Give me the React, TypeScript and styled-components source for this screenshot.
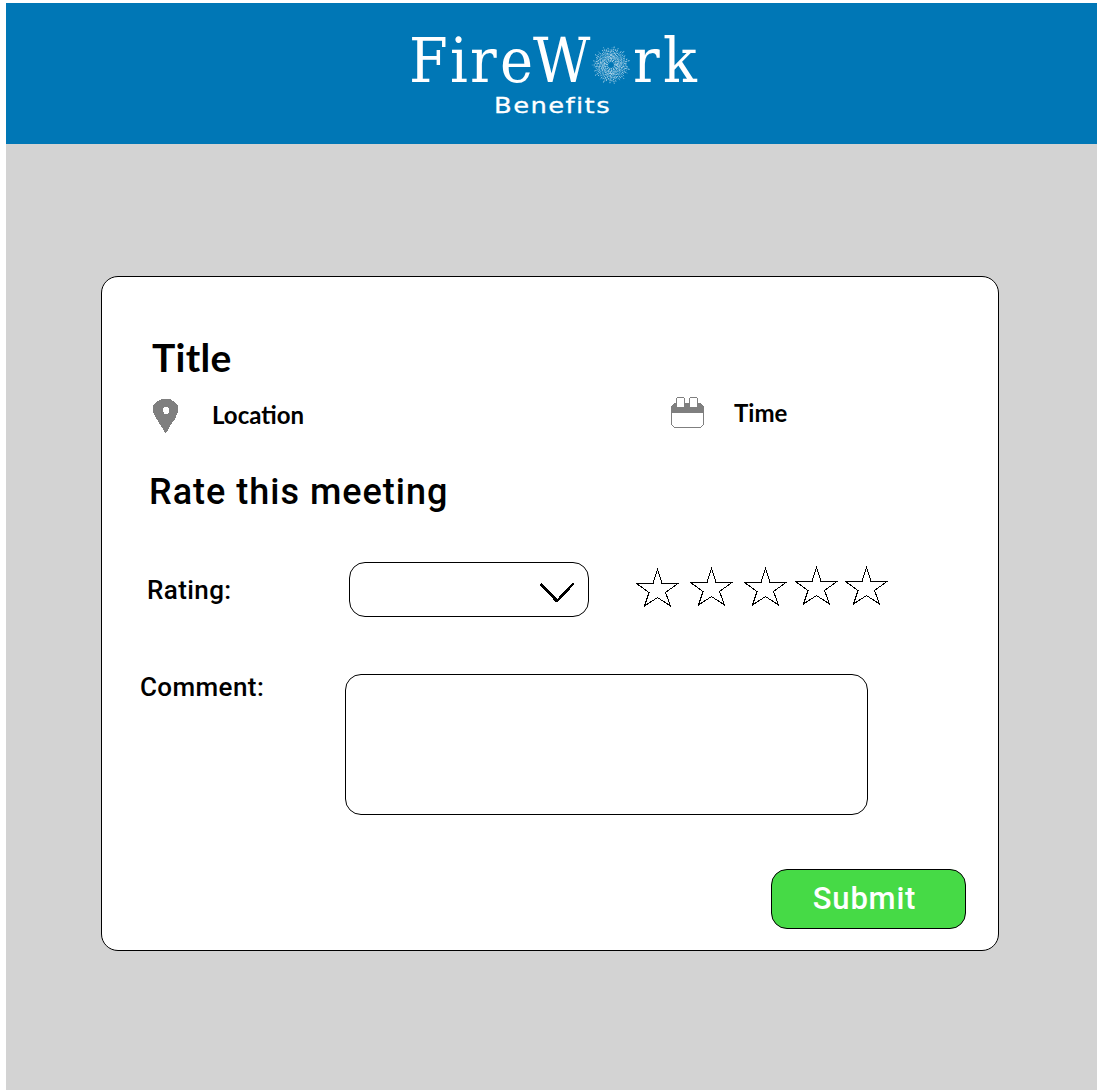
import React from "react";
import styled, { createGlobalStyle } from "styled-components";

const GlobalStyle = createGlobalStyle`
  body { margin: 0; background: #fff; }
  * { box-sizing: border-box; }
`;

const Page = styled.div`
  display: flex;
  flex-direction: column;
  height: 1090px;
  padding: 3px 0 0 6px;
  font-family: Roboto, sans-serif;
  color: #000;
`;

const Header = styled.header`
  display: flex;
  height: 141px;
  padding: 27px 0 0 394px;
  background: #0077b6;
`;

const Main = styled.main`
  flex: 1;
  padding: 132px 98px 0 95px;
  background: #d3d3d3;
`;

const Card = styled.section`
  display: flex;
  flex-direction: column;
  height: 675px;
  padding: 60px 32px 0 38px;
  border: 1px solid #000;
  border-radius: 17px;
  background: #fff;
`;

const Title = styled.h1`
  margin: 0 0 20px 12px;
  font: 700 39px/40px Lato, sans-serif;
  letter-spacing: 0.3px;
`;

const MetaRow = styled.div`
  display: flex;
  height: 36px;
  margin-left: 13px;
`;

const MetaItem = styled.div<{ $width: number; $gap: number; $drop: number }>`
  display: flex;
  align-items: flex-start;
  gap: ${(p) => p.$gap}px;
  width: ${(p) => p.$width}px;

  span {
    padding-top: ${(p) => p.$drop}px;
    font: 700 24px/28px Lato, sans-serif;
  }
`;

const SectionTitle = styled.h2`
  margin: 39px 0 0 9px;
  font-size: 36px;
  font-weight: 500;
  line-height: 40px;
  letter-spacing: 1px;
`;

const FormRow = styled.div<{ $top: number; $indent: number }>`
  display: flex;
  align-items: flex-start;
  margin-top: ${(p) => p.$top}px;
  padding-left: ${(p) => p.$indent}px;
`;

const Label = styled.label<{ $width: number; $shift: number; $spacing: number }>`
  width: ${(p) => p.$width}px;
  margin-top: ${(p) => p.$shift}px;
  font-size: 26px;
  font-weight: 500;
  line-height: 30px;
  letter-spacing: ${(p) => p.$spacing}px;
`;

const Select = styled.div`
  display: flex;
  justify-content: flex-end;
  width: 240px;
  height: 55px;
  padding: 18px 13px 0 0;
  border: 1px solid #000;
  border-radius: 16px;
`;

const Stars = styled.div`
  display: flex;
  margin: 4px 0 0 47px;
`;

const StarCell = styled.div<{ $width: number; $drop: number }>`
  width: ${(p) => p.$width}px;
  padding-top: ${(p) => p.$drop}px;
  line-height: 0;
`;

const CommentBox = styled.div`
  width: 523px;
  height: 141px;
  border: 1px solid #000;
  border-radius: 16px;
`;

const SubmitButton = styled.button`
  align-self: flex-end;
  width: 195px;
  height: 60px;
  margin-top: 54px;
  padding: 0 8px 2px 0;
  border: 1px solid #000;
  border-radius: 16px;
  background: #46da46;
  color: #fff;
  font: 500 31px/58px Roboto, sans-serif;
  letter-spacing: 0.8px;
`;

const sparks = Array.from({ length: 54 }, (_, i) => {
  const angle = (i * Math.PI * 2) / 54;
  const outer = 15.5 + ((i * 7) % 5) * 0.9;
  const inner = 3 + ((i * 5) % 4) * 1.6;
  return {
    x1: 211 + Math.cos(angle) * inner,
    y1: 35 + Math.sin(angle) * inner,
    x2: 211 + Math.cos(angle) * outer,
    y2: 35 + Math.sin(angle) * outer,
    dash: `${1.5 + (i % 3) * 0.7} ${0.7 + (i % 2) * 0.5}`,
  };
});

const Logo = () => (
  <svg width="310" height="100" viewBox="0 0 310 100" fill="#fff">
    <g fontFamily="DejaVu Serif Condensed, DejaVu Serif, serif" fontStretch="condensed" fontSize="62">
      <text x="9 50 70 100 133" y="52">FireW</text>
      <text x="233 263" y="52">rk</text>
    </g>
    <g stroke="#b9d9eb" strokeWidth="0.85">
      {sparks.map((s, i) => (
        <line key={i} x1={s.x1} y1={s.y1} x2={s.x2} y2={s.y2} strokeDasharray={s.dash} />
      ))}
    </g>
    <text
      x="94" y="83" fontFamily="DejaVu Sans, sans-serif" fontSize="22"
      letterSpacing="1.2" textLength="117" lengthAdjust="spacingAndGlyphs"
      stroke="#fff" strokeWidth="0.3"
    >
      Benefits
    </text>
  </svg>
);

const PinIcon = () => (
  <svg width="26" height="36" viewBox="0 0 26 36" shapeRendering="crispEdges">
    <path
      fillRule="evenodd" fill="#7f7f7f"
      d="M9 2H17L22 5L25 9V15L22 22L17 29L13.5 35.5H12L8 29L3 21L0 15V9L4 4.500ZM13 10a3.200 3.500 0 1 0 .1 0Z"
    />
  </svg>
);

const CalendarIcon = () => (
  <svg width="34" height="32" viewBox="0 0 34 32" shapeRendering="crispEdges">
    <path fill="#fff" stroke="#7f7f7f" d="M3.500 6.500H29.500L32.500 9.500V27.500L29.500 30.500H3.500L.5 27.500V9.500Z" />
    <path fill="#7f7f7f" d="M3 6H30L33 10V16H0V10Z" />
    <path fill="#fff" stroke="#7f7f7f" d="M6.500 .5H12.500L13.500 1.500V10.500H5.500V1.500ZM19.500 .5H25.500L26.500 1.500V10.500H18.500V1.500Z" />
  </svg>
);

const Chevron = () => (
  <svg width="36" height="24" viewBox="0 0 36 24" fill="none" stroke="#000" strokeLinecap="round" shapeRendering="crispEdges">
    <path strokeWidth="3" d="M2.500 4L18 20" />
    <path strokeWidth="2.500" d="M18 20L34 3" />
  </svg>
);

const Star = () => (
  <svg width="43" height="40" viewBox="0 0 43 40" fill="none" stroke="#000" shapeRendering="crispEdges">
    <path d="M21.500 1L26 15.500H42L29.500 24.500L34.500 38L21.500 29.500L8.500 38L13 24.500L.5 15.500H17Z" />
  </svg>
);

const starCells = [
  { width: 54, drop: 2 },
  { width: 54, drop: 1 },
  { width: 51, drop: 1 },
  { width: 50, drop: 0 },
  { width: 43, drop: 0 },
];

export default function App() {
  return (
    <>
      <GlobalStyle />
      <Page>
        <Header>
          <Logo />
        </Header>
        <Main>
          <Card>
            <Title>Title</Title>
            <MetaRow>
              <MetaItem $width={518} $gap={33} $drop={4}>
                <PinIcon />
                <span>Location</span>
              </MetaItem>
              <MetaItem $width={160} $gap={29} $drop={2}>
                <CalendarIcon />
                <span>Time</span>
              </MetaItem>
            </MetaRow>
            <SectionTitle>Rate this meeting</SectionTitle>
            <FormRow $top={50} $indent={7}>
              <Label $width={202} $shift={13} $spacing={0.4}>Rating:</Label>
              <Select>
                <Chevron />
              </Select>
              <Stars>
                {starCells.map((cell, i) => (
                  <StarCell key={i} $width={cell.width} $drop={cell.drop}>
                    <Star />
                  </StarCell>
                ))}
              </Stars>
            </FormRow>
            <FormRow $top={57} $indent={0}>
              <Label $width={205} $shift={-2} $spacing={0.4}>Comment:</Label>
              <CommentBox />
            </FormRow>
            <SubmitButton>Submit</SubmitButton>
          </Card>
        </Main>
      </Page>
    </>
  );
}
